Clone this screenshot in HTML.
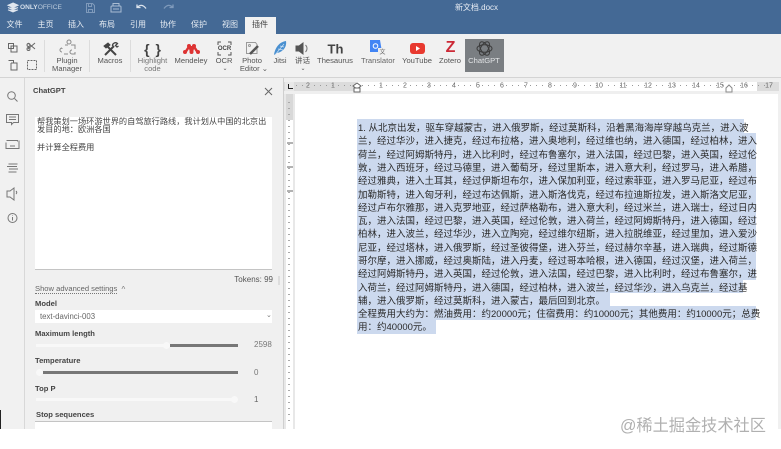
<!DOCTYPE html>
<html><head><meta charset="utf-8"><style>
html,body{margin:0;padding:0;background:#fff}
#p{position:relative;width:781px;height:449px;overflow:hidden;background:#fff;font-family:"Liberation Sans","Noto Sans CJK SC",sans-serif;filter:blur(.3px)}
#p div,#p svg{position:absolute}
.t{white-space:nowrap;transform:translate(-50%,-50%);font-size:7.6px;color:#555;line-height:1}
.m{white-space:nowrap;transform:translate(-50%,-50%);font-size:8px;color:#e6ecf3;line-height:1;top:25px}
.l{white-space:nowrap;font-size:8px;line-height:1;color:#444}
.b{font-weight:bold;color:#444;font-size:7.6px}
.d{left:358px;width:398px;height:13px;font-size:9.5px;line-height:13px;color:#2a2a2a;white-space:nowrap;text-align:justify;text-align-last:justify}
.n{white-space:nowrap;transform:translate(-50%,-50%);font-size:7px;color:#666;top:85.5px;line-height:1}
.sep{width:1px;top:40px;height:32px;background:#dcdcdc}
</style></head><body><div id="p">
<div style="left:0;top:0;width:781px;height:34px;background:#446995"></div>
<div style="left:245px;top:17px;width:31px;height:17px;background:#f1f1f1"></div>
<svg style="left:6px;top:2px" width="14" height="12" viewBox="0 0 14 12"><path d="M7 1l5 2.200-5 2.200-5-2.200zM2 5.500l5 2.200 5-2.200M2 7.800L7 10l5-2.200" fill="#dfe6ef" stroke="#dfe6ef"/></svg>
<div class="l" style="left:20px;top:4.500px;font-size:6.600px;font-weight:bold;color:#d5dfeb">ONLY<span style="font-weight:normal;color:#bccbdc">OFFICE</span></div>
<svg style="left:85px;top:2px" width="11" height="12"><path d="M1.500 1.500h6l2 2v7h-8zM3.500 1.500v3h3v-3M3.500 10.500v-3h4v3" fill="none" stroke="#7f9abb"/></svg>
<svg style="left:110px;top:2px" width="12" height="12"><path d="M2 4h8a1 1 0 0 1 1 1v5H1V5a1 1 0 0 1 1-1zM3 4V1.500h6V4M3 7h6" fill="none" stroke="#a9bcd2"/></svg>
<svg style="left:136px;top:3px" width="11" height="10"><path d="M1 4.500c3-3 6-3 9 1M1 1.500v3h3.500" fill="none" stroke="#dbe3ed" stroke-width="1.300"/></svg>
<svg style="left:163px;top:3px" width="11" height="10"><path d="M10 4.500c-3-3-6-3-9 1M10 1.500v3H6.500" fill="none" stroke="#7f9abb" stroke-width="1.300"/></svg>
<div class="m" style="left:14.500px">文件</div><div class="m" style="left:45.500px">主页</div><div class="m" style="left:76px">插入</div><div class="m" style="left:107px">布局</div><div class="m" style="left:138px">引用</div><div class="m" style="left:168px">协作</div><div class="m" style="left:199px">保护</div><div class="m" style="left:230px">视图</div><div class="m" style="left:260px;color:#444">插件</div>
<div class="t" style="left:476.500px;top:8px;font-size:8px;color:#e8edf4">新文档.docx</div>

<div style="left:0;top:34px;width:781px;height:43px;background:#f1f1f1"></div>
<div style="left:0;top:77px;width:781px;height:1px;background:#d4d4d4"></div>
<svg style="left:6px;top:41px" width="32" height="32" fill="none" stroke="#666"><path d="M2.500 2.500h5v5h-5zM5 5h6v6H5zM22 2l7 6M29 2l-7 6M2.500 19.500h5v2M5 22h6v7H5v-7"/><path d="M21.500 19.500h9v9h-9z" stroke-dasharray="2 1"/><circle cx="22.500" cy="4" r="1.500"/><circle cx="22.500" cy="8" r="1.500"/></svg>
<div class="sep" style="left:44px"></div><div class="sep" style="left:89px"></div><div class="sep" style="left:130px"></div>
<svg style="left:58px;top:38px" width="19" height="18" fill="none" stroke="#8a8a8a"><circle cx="11" cy="4" r="2"/><path d="M7 7h3M13 7h4v4M4 11v-1M4 10a2 2 0 1 0 0 4M6 16h4M14 12a2 2 0 1 0 0 4h3v-2"/></svg>
<svg style="left:102px;top:42px" width="17" height="14" fill="none" stroke="#444" stroke-width="2"><path d="M3 13L12 4M14 13L5 4"/><path d="M2 4l4-3 2 2-4 3z" fill="#444" stroke-width="1"/><path d="M10.500 4a3 3 0 0 1 5-2.500l-2 2 1.500 1.500 1.500-1" stroke-width="1.300"/></svg>
<div class="t" style="left:153px;top:48.500px;font-size:14px;font-weight:bold;color:#444;letter-spacing:1px">{ }</div>
<svg style="left:182px;top:43px" width="19" height="12" fill="#d33"><circle cx="7" cy="3" r="2"/><circle cx="12" cy="3" r="2"/><circle cx="3" cy="9" r="2"/><circle cx="9.500" cy="9" r="2"/><circle cx="16" cy="9" r="2"/><path d="M6 3l-4 6h3l2-3 1 3h3l1-3 2 3h3l-4-6z"/></svg>
<svg style="left:217px;top:41px" width="15" height="15" fill="none" stroke="#555"><path d="M1 4V1h3M11 1h3v3M14 11v3h-3M4 14H1v-3"/></svg>
<div class="t" style="left:224.500px;top:48.500px;font-size:6px;font-weight:bold;color:#444">OCR</div>
<svg style="left:245px;top:41px" width="16" height="15" fill="none"><path d="M1.500 1.500h9l1.500 2v9h-10.500z" stroke="#9a9a9a"/><circle cx="4.500" cy="4.500" r="1" stroke="#999"/><path d="M5 13L13 5" stroke="#555" stroke-width="2.500"/></svg>
<svg style="left:273px;top:40px" width="15" height="16"><path d="M1 15C2 8 6 2 13 1c1 6-3 11-9 12z" fill="#4a90d0"/><path d="M2 15L11 4M5 9l5 1M7 6l4 1" stroke="#cfe2f5" stroke-width=".7" fill="none"/></svg>
<svg style="left:295px;top:42px" width="16" height="13" fill="none" stroke="#777"><path d="M1 4h3l4-3v11L4 9H1z" fill="#555" stroke="#555"/><path d="M10.500 3c2 2 2 5 0 7"/></svg>
<div class="t" style="left:335.500px;top:48.500px;font-size:13px;font-weight:bold;color:#444">Th</div>
<svg style="left:370px;top:40px" width="16" height="16"><path d="M0 0h10l2 12H0z" fill="#4285f4"/><path d="M8 8h7v7H8z" fill="#eee"/><circle cx="5.500" cy="6" r="2.300" fill="none" stroke="#fff"/><text x="9.500" y="14" font-size="6" fill="#666">文</text></svg>
<svg style="left:410px;top:43px" width="15" height="11"><rect width="15" height="11" rx="3" fill="#e8392f"/><path d="M6 3l4 2.500-4 2.500z" fill="#fff"/></svg>
<div class="t" style="left:450.500px;top:48px;font-size:16px;font-weight:bold;color:#cc2936">Z</div>
<div style="left:465px;top:39px;width:39px;height:33px;background:#7a7e82"></div>
<svg style="left:476px;top:40px" width="17" height="17" viewBox="0 0 17 17" fill="none" stroke="#3a3a3a"><ellipse cx="8.500" cy="8.500" rx="7.500" ry="3.800"/><ellipse cx="8.500" cy="8.500" rx="7.500" ry="3.800" transform="rotate(60 8.500 8.500)"/><ellipse cx="8.500" cy="8.500" rx="7.500" ry="3.800" transform="rotate(120 8.500 8.500)"/></svg>
<div class="t" style="left:67px;top:61px">Plugin</div><div class="t" style="left:67px;top:68.500px">Manager</div>
<div class="t" style="left:110px;top:61px">Macros</div>
<div class="t" style="left:152.500px;top:61px;color:#777">Highlight</div><div class="t" style="left:152.500px;top:68.500px;color:#777">code</div>
<div class="t" style="left:191px;top:61px">Mendeley</div>
<div class="t" style="left:224px;top:61px">OCR</div><div class="t" style="left:225px;top:69px;font-size:6px">⌄</div>
<div class="t" style="left:252px;top:61px">Photo</div><div class="t" style="left:254px;top:68.500px">Editor ⌄</div>
<div class="t" style="left:280px;top:61px">Jitsi</div>
<div class="t" style="left:302.500px;top:61px">讲话</div><div class="t" style="left:303px;top:69px;font-size:6px">⌄</div>
<div class="t" style="left:335px;top:61px">Thesaurus</div><div class="t" style="left:378px;top:61px;color:#666">Translator</div><div class="t" style="left:417px;top:61px">YouTube</div><div class="t" style="left:450px;top:61px">Zotero</div><div class="t" style="left:484px;top:61px;color:#e2e4e6">ChatGPT</div>

<div style="left:0;top:78px;width:24px;height:351px;background:#f1f1f1"></div>
<div style="left:24px;top:78px;width:1px;height:351px;background:#d8d8d8"></div>
<div style="left:25px;top:78px;width:258px;height:351px;background:#f0f0f0"></div>
<div style="left:283px;top:78px;width:1px;height:351px;background:#cfcfcf"></div>
<div style="left:0;top:410px;width:1px;height:19px;background:#222"></div>
<svg style="left:5px;top:88px" width="16" height="140" fill="none" stroke="#777"><circle cx="6.500" cy="7.500" r="3.800"/><path d="M9.500 10.500l3 3M1.500 26.500h12v8h-5l-2 2v-2h-5zM4 29h7M4 31.500h7M1.500 52.500h11v1M1 54.500v6h13v-8M5 58h5M3.500 76h9M2 78.500h10M4 81h9M3.500 84h8M2 103h3l4-3v12l-4-3H2zM11 103c1 1 1 2 0 3"/><circle cx="7.500" cy="130" r="4.500"/><path d="M7.500 129v3.500M7.500 127.500v.5"/></svg>

<div class="l b" style="left:33px;top:87px">ChatGPT</div>
<svg style="left:264px;top:87px" width="9" height="9" stroke="#666"><path d="M1 1l7 7M8 1l-7 7"/></svg>
<div style="left:35px;top:117px;width:237px;height:152px;background:#fff;border-bottom:1px solid #c4c4c4"></div>
<div class="l" style="left:37px;top:117.500px;font-size:8.200px;color:#444">帮我策划一场环游世界的自驾旅行路线，我计划从中国的北京出</div>
<div class="l" style="left:37px;top:126px;font-size:8.200px;color:#444">发目的地：欧洲各国</div>
<div class="l" style="left:37px;top:143.500px;font-size:8.200px;color:#444">并计算全程费用</div>
<div class="l" style="right:508px;top:276px;color:#555">Tokens: 99</div>
<div style="left:278px;top:276px;width:2px;height:9px;background:#ddd"></div>
<div class="l" style="left:35px;top:285px;color:#666;font-size:7.600px;border-bottom:1px dotted #777">Show advanced settings</div>
<div class="l" style="left:121.500px;top:286px;color:#777">^</div>
<div class="l b" style="left:35px;top:300px">Model</div>
<div style="left:35px;top:310px;width:237px;height:13px;background:#fff"></div>
<div class="l" style="left:40px;top:313px;color:#666;font-size:7.800px">text-davinci-003</div>
<div class="l" style="left:266px;top:312px;color:#777;font-size:7px">⌄</div>
<div class="l b" style="left:35px;top:330px">Maximum length</div>
<div style="left:36px;top:344px;width:202px;height:3px;background:#f8f8f8"></div>
<div style="left:170px;top:344px;width:68px;height:3px;background:#777"></div>
<div style="left:163px;top:342px;width:7px;height:7px;border-radius:4px;background:#f8f8f8"></div>
<div class="l" style="left:254px;top:341px;color:#777">2598</div>
<div class="l b" style="left:35px;top:357px">Temperature</div>
<div style="left:43px;top:371px;width:195px;height:3px;background:#777"></div>
<div style="left:36px;top:369px;width:7px;height:7px;border-radius:4px;background:#f8f8f8"></div>
<div class="l" style="left:254px;top:369px;color:#777">0</div>
<div class="l b" style="left:35px;top:385px">Top P</div>
<div style="left:36px;top:398px;width:200px;height:3px;background:#f8f8f8"></div>
<div style="left:231px;top:396px;width:7px;height:7px;border-radius:4px;background:#f8f8f8"></div>
<div class="l" style="left:254px;top:396px;color:#666">1</div>
<div class="l b" style="left:36px;top:411px">Stop sequences</div>
<div style="left:35px;top:421px;width:237px;height:8px;background:#fff;border-top:1px solid #c4c4c4"></div>

<div style="left:284px;top:78px;width:497px;height:16px;background:#efefef"></div>
<div style="left:284px;top:82px;width:495px;height:9px;background:#dcdcdc"></div>
<div style="left:356px;top:82px;width:401px;height:9px;background:#fff"></div>
<div style="left:285px;top:82px;width:9px;height:9px;background:#e8e8e8"></div>
<div style="left:288px;top:84px;width:4px;height:4px;border-left:1.500px solid #222;border-bottom:1.500px solid #222"></div>
<div class="n" style="left:308px">2</div><div class="n" style="left:333px">1</div><div class="n" style="left:381px">1</div><div class="n" style="left:405px">2</div><div class="n" style="left:429px">3</div><div class="n" style="left:454px">4</div><div class="n" style="left:478px">5</div><div class="n" style="left:502px">6</div><div class="n" style="left:526px">7</div><div class="n" style="left:550px">8</div><div class="n" style="left:575px">9</div><div class="n" style="left:599px">10</div><div class="n" style="left:623px">11</div><div class="n" style="left:648px">12</div><div class="n" style="left:672px">13</div><div class="n" style="left:696px">14</div><div class="n" style="left:720px">15</div><div class="n" style="left:744px">16</div><div class="n" style="left:769px">17</div>
<svg style="left:296px;top:79px" width="480" height="14" stroke="#999"><path stroke-dasharray="1 5" d="M0 6.500h475"/><path d="M57 7l4 3 4-3-4-3z" fill="#fff" stroke="#666"/><path d="M58 9h6v4h-6z" fill="#fff" stroke="#666"/><path d="M430 13h6v-4l-3-3-3 3z" fill="#fff" stroke="#888"/></svg>
<div style="left:284px;top:94px;width:11px;height:335px;background:#e8e8e8"></div>
<div style="left:286px;top:94px;width:7px;height:26px;background:#d8d8d8"></div>
<div style="left:286px;top:120px;width:7px;height:309px;background:#fff"></div>
<svg style="left:286px;top:94px" width="8" height="335"><path d="M3 8v320" stroke="#aaa" stroke-width="2" stroke-dasharray="1 5"/><path d="M1 49h6M1 73h6M1 97h6" stroke="#666"/></svg>
<div style="left:778px;top:94px;width:3px;height:335px;background:#f0f0f0"></div>

<div style="left:357px;top:119px;width:387px;height:14px;background:#ccd9ee"></div>
<div style="left:357px;top:133px;width:399px;height:173px;background:#ccd9ee"></div>
<div style="left:610px;top:293px;width:146px;height:13px;background:#fff"></div>
<div style="left:743px;top:280px;width:13px;height:13px;background:#fff"></div>
<div style="left:357px;top:306px;width:399px;height:14px;background:#ccd9ee"></div>
<div style="left:357px;top:320px;width:79px;height:14px;background:#ccd9ee"></div>
<div class="d" style="top:122px;width:386px">1. 从北京出发，驱车穿越蒙古，进入俄罗斯，经过莫斯科，沿着黑海海岸穿越乌克兰，进入波</div>
<div class="d" style="top:135px">兰，经过华沙，进入捷克，经过布拉格，进入奥地利，经过维也纳，进入德国，经过柏林，进入</div>
<div class="d" style="top:149px">荷兰，经过阿姆斯特丹，进入比利时，经过布鲁塞尔，进入法国，经过巴黎，进入英国，经过伦</div>
<div class="d" style="top:162px">敦，进入西班牙，经过马德里，进入葡萄牙，经过里斯本，进入意大利，经过罗马，进入希腊，</div>
<div class="d" style="top:175px">经过雅典，进入土耳其，经过伊斯坦布尔，进入保加利亚，经过索菲亚，进入罗马尼亚，经过布</div>
<div class="d" style="top:189px">加勒斯特，进入匈牙利，经过布达佩斯，进入斯洛伐克，经过布拉迪斯拉发，进入斯洛文尼亚，</div>
<div class="d" style="top:202px">经过卢布尔雅那，进入克罗地亚，经过萨格勒布，进入意大利，经过米兰，进入瑞士，经过日内</div>
<div class="d" style="top:215px">瓦，进入法国，经过巴黎，进入英国，经过伦敦，进入荷兰，经过阿姆斯特丹，进入德国，经过</div>
<div class="d" style="top:228px">柏林，进入波兰，经过华沙，进入立陶宛，经过维尔纽斯，进入拉脱维亚，经过里加，进入爱沙</div>
<div class="d" style="top:242px">尼亚，经过塔林，进入俄罗斯，经过圣彼得堡，进入芬兰，经过赫尔辛基，进入瑞典，经过斯德</div>
<div class="d" style="top:255px">哥尔摩，进入挪威，经过奥斯陆，进入丹麦，经过哥本哈根，进入德国，经过汉堡，进入荷兰，</div>
<div class="d" style="top:268px">经过阿姆斯特丹，进入英国，经过伦敦，进入法国，经过巴黎，进入比利时，经过布鲁塞尔，进</div>
<div class="d" style="top:282px;width:385px">入荷兰，经过阿姆斯特丹，进入德国，经过柏林，进入波兰，经过华沙，进入乌克兰，经过基</div>
<div class="d" style="top:295px;width:252px;text-align-last:left">辅，进入俄罗斯，经过莫斯科，进入蒙古，最后回到北京。</div>
<div class="d" style="top:308px">全程费用大约为：燃油费用：约20000元；住宿费用：约10000元；其他费用：约10000元；总费</div>
<div class="d" style="top:321px;width:78px;text-align-last:left">用：约40000元。</div>
<div style="left:620px;top:416.500px;white-space:nowrap;font-size:16.200px;line-height:18px;color:#b0b0b0">@稀土掘金技术社区</div>
</div></body></html>
